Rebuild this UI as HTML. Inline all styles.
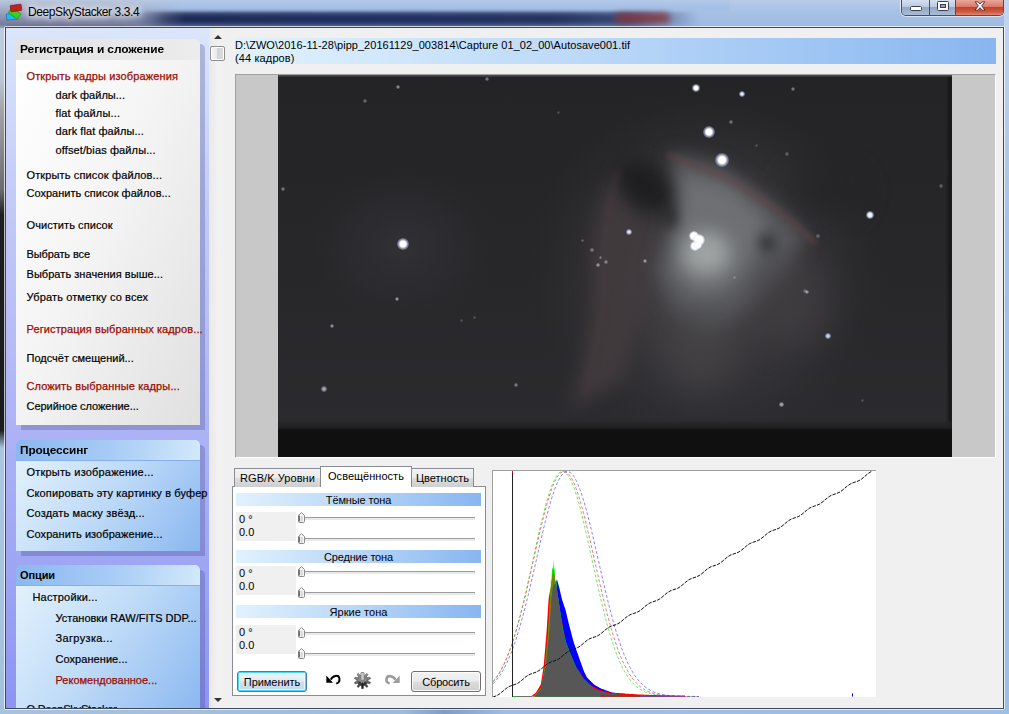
<!DOCTYPE html>
<html lang="ru"><head><meta charset="utf-8"><title>DeepSkyStacker 3.3.4</title>
<style>
*{box-sizing:border-box;margin:0;padding:0}
html,body{width:1009px;height:714px;overflow:hidden}
body{position:relative;font-family:"Liberation Sans",sans-serif;font-size:11px;color:#000;background:#a2c1e6}
.abs,.win *{position:absolute}
.win{position:absolute;left:0;top:0;width:1009px;height:714px;overflow:hidden}
/* aero frame */
.frameL{left:0;top:24px;width:6px;height:690px;background:linear-gradient(180deg,rgba(122,127,154,0) 0,#c0cde0 8px,#b9c6d6 56px,#a3a5a8 86px,#6a6b6e 166px,#1d1e22 191px,#1a1b1f 406px,#a9c6e2 424px,#a3c0de 690px)}
.frameR{left:1004px;top:0;width:5px;height:714px;background:linear-gradient(180deg,#c3d6ee 0,#b7cdea 100px,#a3c2e6 240px,#9dbfe4 714px)}
.frameB{left:0;top:709px;width:1009px;height:5px;background:linear-gradient(90deg,#a6c2de 0,#9ebbdc 40%,#7f9cc4 44%,#9ebde2 50%,#9dbfe4 100%)}
.title{left:0;top:0;width:1009px;height:28px;background:linear-gradient(180deg,#b9cbe6 0,#a9c2e6 10px,#9fbbe2 27px)}
.tl{left:0;top:0;width:200px;height:28px;background:linear-gradient(180deg,rgba(186,200,222,1) 0,rgba(150,158,186,1) 14px,rgba(112,118,150,1) 26px);-webkit-mask-image:linear-gradient(90deg,#000 0,#000 120px,transparent 185px);mask-image:linear-gradient(90deg,#000 0,#000 120px,transparent 185px)}
.tl2{left:100px;top:0;width:90px;height:28px;background:linear-gradient(90deg,rgba(0,0,0,0),#a9c2e6 100%);opacity:0}
.navy{left:110px;top:11px;width:590px;height:16px;border-radius:8px;background:linear-gradient(90deg,rgba(30,40,80,0) 0,#1b2854 9%,#1c2c5c 40%,#22305e 75%,#3a4a78 88%,rgba(80,100,150,0) 100%);filter:blur(3.5px)}
.navytop{left:130px;top:0;width:600px;height:13px;background:linear-gradient(180deg,#b4c9e8 0,#a4c0e6 8px,rgba(150,175,215,0) 13px)}
.redblob{left:615px;top:13px;width:55px;height:10px;border-radius:5px;background:#8a3438;filter:blur(3px);opacity:.8}
.ttext{left:28px;top:5px;font-size:12px;line-height:15px;white-space:nowrap;color:#000;text-shadow:0 0 6px #fff,0 0 8px #fff,0 0 10px rgba(255,255,255,.9)}
/* caption buttons */
.cap{left:901px;top:0;width:103px;height:16px;border:1px solid #46506a;border-top:0;border-radius:0 0 5px 5px;box-shadow:0 0 0 1px rgba(255,255,255,.55);overflow:hidden}
.cb{top:0;height:15px;background:linear-gradient(180deg,#d4dfee 0,#bccbe0 45%,#93a8c6 50%,#a9bcd6 100%)}
.cmin{left:0;width:28px;border-right:1px solid #46506a}
.cmax{left:28px;width:26px;border-right:1px solid #46506a}
.ccl{left:54px;width:48px;background:linear-gradient(180deg,#eaa79b 0,#d9796a 45%,#c6402a 50%,#cf5a40 80%,#dd8a72 100%)}
/* client */
.clientbd{left:4px;top:26px;width:1001px;height:684px;border:1px solid rgba(255,255,255,.7);border-radius:2px}
.client{left:5px;top:27px;width:999px;height:682px;border:1px solid #3f4a60;background:#f0f0f0;overflow:hidden}
.bar{left:0;top:0;width:203px;height:680px;background:linear-gradient(180deg,#dbe6fa 0,#c4ccf8 160px,#aeb4f5 390px,#9ca3f3 560px,#8d94f1 680px);overflow:hidden}
.sb{left:203px;top:0;width:17px;height:680px;background:linear-gradient(90deg,#e9e9e9 0,#f1f1f1 55%,#f0f0f0 100%)}
.sbthumb{left:1px;top:18px;width:15px;height:15px;border:1px solid #8e8e8e;border-radius:2px;background:linear-gradient(90deg,#f6f6f6 0,#e9e9ea 45%,#d3d4d7 50%,#dcdde0 100%);box-shadow:inset 0 0 0 1px #fff}
.arr{left:5px;width:0;height:0;border-left:4px solid transparent;border-right:4px solid transparent}
.arr.up{top:7px;border-bottom:4px solid #333}
.arr.dn{top:670px;border-top:4px solid #333}
/* panels */
.pshadow{background:rgba(60,70,130,.28)}
.phead{left:10px;width:184px;height:21px;font-weight:bold;font-size:11px;line-height:20px;padding-left:4px;white-space:nowrap;border-radius:5px 5px 0 0;letter-spacing:-.1px}
.pbody{left:10px;width:184px}
.p1h{top:11px;background:linear-gradient(100deg,#e2e2e2 0,#ececec 100%)}
.p1b{top:32px;height:365px;background:linear-gradient(115deg,#ffffff 0,#f4f4f4 45%,#e0e0e0 100%)}
.p2h{top:412px;background:linear-gradient(100deg,#8bb7f0 0,#a9cdf5 55%,#d3e9fb 100%);border-bottom:1px solid #86b0ec}
.p2b{top:433px;height:90px;background:linear-gradient(125deg,#e2f1fc 0,#bcd9f8 50%,#8ab7f0 100%)}
.p3h{top:537px;background:linear-gradient(100deg,#8bb7f0 0,#a9cdf5 55%,#d3e9fb 100%);border-bottom:1px solid #86b0ec}
.p3b{top:558px;height:130px;background:linear-gradient(125deg,#e2f1fc 0,#c0dcf8 45%,#8ab7f0 100%)}
.f{position:static!important;white-space:nowrap}
.it{white-space:nowrap;font-size:11px;line-height:15px;color:#000;-webkit-text-stroke:.2px #000}
.it.red{color:#9a0c00;-webkit-text-stroke:.25px #9a0c00}
/* main */
.path{left:229px;top:10px;width:761px;height:26px;background:linear-gradient(90deg,#e1f2fd 0,#bcd9f8 45%,#88b6f0 100%);font-size:11px;line-height:12.5px;padding:1px 0 0 0;white-space:nowrap}
.imgframe{left:229px;top:46px;width:761px;height:384px;background:#c8c8c8;border:1px solid;border-color:#a0a0a0 #fff #fff #a0a0a0}
.photo{left:42px;top:0;width:674px;height:382px;overflow:hidden;background:
 radial-gradient(ellipse 60px 38px at 362px 120px,rgba(24,24,27,.85) 0,rgba(24,24,27,.5) 55%,rgba(24,24,27,0) 100%),
 radial-gradient(ellipse 40px 34px at 418px 168px,rgba(168,168,172,.95) 0,rgba(140,140,145,.7) 40%,rgba(100,100,104,.25) 75%,rgba(90,90,95,0) 100%),
 radial-gradient(ellipse 70px 80px at 405px 175px,rgba(125,122,126,.85) 0,rgba(100,97,100,.55) 50%,rgba(70,66,70,0) 100%),
 radial-gradient(ellipse 120px 130px at 400px 215px,rgba(86,80,84,.9) 0,rgba(66,61,64,.6) 50%,rgba(45,42,45,0) 100%),
 radial-gradient(ellipse 200px 190px at 400px 200px,rgba(52,48,52,.9) 0,rgba(44,42,45,.5) 55%,rgba(36,36,38,0) 100%),
 radial-gradient(ellipse 70px 60px at 125px 170px,rgba(48,47,50,.9) 0,rgba(38,38,40,0) 100%),
 radial-gradient(ellipse 480px 300px at 337px 180px,#2a2a2c 0,#262628 60%,#1e1e20 100%)}
.photo i{display:block;border-radius:50%}
.neb{left:0;top:0}
.redarc{left:385px;top:70px;width:150px;height:3px;background:linear-gradient(90deg,rgba(110,70,70,0),rgba(120,78,78,.7) 30%,rgba(110,72,72,.6) 70%,rgba(100,70,70,0));transform-origin:0 50%;transform:rotate(41deg);filter:blur(1.5px)}
.redarc2{left:330px;top:150px;width:120px;height:4px;background:linear-gradient(90deg,rgba(100,66,66,0),rgba(100,66,66,.5) 40%,rgba(100,70,70,0));transform-origin:100% 50%;transform:rotate(-62deg);filter:blur(2px)}
.pband{left:0;top:340px;width:674px;height:42px;background:linear-gradient(180deg,rgba(16,16,16,0) 0,rgba(22,22,24,.55) 10px,#0f0f0f 15px,#0e0e0e 100%)}
.pvl{left:0;top:0;width:6px;height:382px;background:linear-gradient(90deg,rgba(10,10,10,.5),rgba(10,10,10,0))}
.pvr{left:656px;top:0;width:18px;height:382px;background:linear-gradient(270deg,rgba(14,14,16,.85) 0,rgba(20,20,22,.5) 6px,rgba(20,20,22,0) 18px)}
.pvt{left:0;top:0;width:674px;height:5px;background:linear-gradient(180deg,rgba(90,90,90,.5),rgba(40,40,40,0))}
/* tabs */
.tabs{left:226px;top:438px;width:262px;height:232px}
.tab{height:19px;top:2px;border:1px solid #898c95;border-bottom:0;background:linear-gradient(180deg,#f2f2f2 0,#ebebeb 50%,#dddddd 51%,#cfcfcf 100%);font-size:11px;line-height:18px;text-align:center;white-space:nowrap}
.tab.act{top:0;height:21px;background:#fff;z-index:3;line-height:18px}
.page{left:0;top:20px;width:254px;height:210px;border:1px solid #898c95;background:#fff}
.ghead{left:4px;width:245px;height:13px;padding-top:1px;background:linear-gradient(90deg,#e1f2fd 0,#bcd9f8 45%,#88b6f0 100%);font-size:11px;line-height:13px;text-align:center;white-space:nowrap}
.lbl{left:4px;width:60px;height:29px;background:#f0f0f0}
.lbl span{left:3px;font-size:11px;line-height:13px;white-space:nowrap}
.lbl span:first-child{top:1px}
.lbl span:last-child{top:14px}
.trk{left:70px;width:173px;height:3px;background:linear-gradient(180deg,#9c9c9c 0,#9c9c9c 1px,#e7eaea 1px,#e7eaea 100%)}
.thumb{left:66px}
.btn{top:205px;height:21px;border:1px solid #707070;border-radius:3px;background:linear-gradient(180deg,#f2f2f2 0,#ebebeb 48%,#dddddd 52%,#cfcfcf 100%);box-shadow:inset 0 0 0 1px rgba(255,255,255,.85);font-size:11px;line-height:21px;text-align:center;white-space:nowrap}
.btn.def{border-color:#3c7fb1;box-shadow:inset 0 0 0 1px #48d8fb,inset 0 0 0 2px rgba(255,255,255,.6);background:linear-gradient(180deg,#f0f4f9 0,#e0ebf5 48%,#cfdfee 52%,#c4d8ea 100%)}
.hist{left:-1px;top:-1px}
.histbox{left:486px;top:442px;width:384px;height:227px;background:#fff;border-top:1px solid #a0a0a0;border-left:1px solid #a0a0a0;overflow:hidden}
</style></head><body>
<div class="win">
 <div class="title">
  <div class="navy"></div><div class="navytop"></div><div class="redblob"></div>
  <div class="tl"></div>
  <svg class="abs" style="left:5px;top:3px" width="20" height="18" viewBox="0 0 20 18">
   <g transform="rotate(-6 8 14)"><rect x="1.5" y="10.5" width="11" height="6" fill="#22b7ee" stroke="#1a6a90" stroke-width=".6"/></g>
   <g transform="rotate(38 9.5 10.5)"><rect x="4" y="7" width="11" height="6.5" fill="#36d21e" stroke="#1f8a12" stroke-width=".6"/></g>
   <g transform="rotate(-8 11 5)"><rect x="5.5" y="1.8" width="11" height="6.3" rx=".6" fill="#c4201c" stroke="#7a1010" stroke-width=".6"/></g>
  </svg>
  <div class="ttext"><span class="f" style="letter-spacing:-0.406px">DeepSkyStacker 3.3.4</span></div>
  <div class="cap">
   <div class="cb cmin"><svg class="abs" style="left:8px;top:6px" width="12" height="6"><rect x=".5" y=".5" width="11" height="4" rx="1" fill="#fff" stroke="#3a3f55"/></svg></div>
   <div class="cb cmax"><svg class="abs" style="left:7px;top:1px" width="12" height="11"><rect x=".5" y=".5" width="11" height="9" rx="1" fill="#fff" stroke="#3a3f55"/><rect x="3.5" y="3.5" width="5" height="3" fill="#8fa3c2" stroke="#3a3f55"/></svg></div>
   <div class="cb ccl"><svg class="abs" style="left:18px;top:1px" width="12" height="10" viewBox="0 0 14 12"><path d="M1.2 1 L4.6 1 L7 3.6 L9.4 1 L12.8 1 L9 5.8 L13 11 L9.6 11 L7 8 L4.4 11 L1 11 L5 5.8 Z" fill="#fff" stroke="#4a2a30" stroke-width="1.1"/></svg></div>
  </div>
 </div>
 <div class="frameL"></div><div class="frameR"></div><div class="frameB"></div>
 <div class="clientbd"></div>
 <div class="client">
  <div class="bar">
   <div class="pshadow" style="left:15px;top:16px;width:184px;height:386px;border-radius:5px 5px 0 0"></div>
   <div class="phead p1h"><span class="f" style="display:inline-block;transform-origin:0 50%;transform:scaleX(1.0882)">Регистрация и сложение</span></div><div class="pbody p1b"></div>
   <div class="pshadow" style="left:15px;top:417px;width:184px;height:111px;border-radius:5px 5px 0 0"></div>
   <div class="phead p2h"><span class="f" style="display:inline-block;transform-origin:0 50%;transform:scaleX(1.0740)">Процессинг</span></div><div class="pbody p2b"></div>
   <div class="pshadow" style="left:15px;top:542px;width:184px;height:140px;border-radius:5px 5px 0 0"></div>
   <div class="phead p3h"><span class="f" style="display:inline-block;transform-origin:0 50%;transform:scaleX(1.0000)">Опции</span></div><div class="pbody p3b"></div>
   <span class="it red" style="left:20.5px;top:41px;letter-spacing:0.133px">Открыть кадры изображения</span><span class="it" style="left:49.5px;top:60px;letter-spacing:0.020px">dark файлы...</span><span class="it" style="left:49.5px;top:78px;letter-spacing:0.163px">flat файлы...</span><span class="it" style="left:49.5px;top:96px;letter-spacing:0.076px">dark flat файлы...</span><span class="it" style="left:49.5px;top:115px;letter-spacing:0.120px">offset/bias файлы...</span><span class="it" style="left:20.5px;top:140px;letter-spacing:0.132px">Открыть список файлов...</span><span class="it" style="left:20.5px;top:158px;letter-spacing:0.011px">Сохранить список файлов...</span><span class="it" style="left:20.5px;top:190px;letter-spacing:0.071px">Очистить список</span><span class="it" style="left:20.5px;top:219px;letter-spacing:-0.120px">Выбрать все</span><span class="it" style="left:20.5px;top:239px;letter-spacing:0.052px">Выбрать значения выше...</span><span class="it" style="left:20.5px;top:262px;letter-spacing:0.118px">Убрать отметку со всех</span><span class="it red" style="left:20.5px;top:294px;letter-spacing:0.100px">Регистрация выбранных кадров...</span><span class="it" style="left:20.5px;top:323px;letter-spacing:-0.005px">Подсчёт смещений...</span><span class="it red" style="left:20.5px;top:351px;letter-spacing:0.128px">Сложить выбранные кадры...</span><span class="it" style="left:20.5px;top:371px;letter-spacing:-0.029px">Серийное сложение...</span><span class="it" style="left:20.5px;top:437px;letter-spacing:0.192px">Открыть изображение...</span><span class="it" style="left:20.5px;top:458px;letter-spacing:0.120px">Скопировать эту картинку в буфер</span><span class="it" style="left:20.5px;top:478px;letter-spacing:0.155px">Создать маску звёзд...</span><span class="it" style="left:20.5px;top:499px;letter-spacing:0.069px">Сохранить изображение...</span><span class="it" style="left:26.5px;top:562px;letter-spacing:0.181px">Настройки...</span><span class="it" style="left:49.5px;top:583px;letter-spacing:0.004px">Установки RAW/FITS DDP...</span><span class="it" style="left:49.5px;top:603px;letter-spacing:0.344px">Загрузка...</span><span class="it" style="left:49.5px;top:624px;letter-spacing:0.060px">Сохранение...</span><span class="it red" style="left:49.5px;top:645px;letter-spacing:0.005px">Рекомендованное...</span><span class="it" style="left:20.5px;top:674px;letter-spacing:-0.203px">О DeepSkyStacker</span>
  </div>
  <div class="sb"><div class="arr up"></div><div class="sbthumb"></div><div class="arr dn"></div></div>
  <div class="path"><span class="f" style="letter-spacing:0.040px">D:\ZWO\2016-11-28\pipp_20161129_003814\Capture 01_02_00\Autosave001.tif</span><br><span class="f" style="letter-spacing:0.120px">(44 кадров)</span></div>
  <div class="imgframe"><div class="photo">
    <svg class="neb" width="674" height="382" viewBox="0 0 674 382">
<defs>
<linearGradient id="bgv" x1="0" y1="0" x2="0" y2="1"><stop offset="0" stop-color="#242427"/><stop offset=".5" stop-color="#27272a"/><stop offset="1" stop-color="#2c2c30"/></linearGradient>
<radialGradient id="g1"><stop offset="0" stop-color="#4a4649" stop-opacity="1"/><stop offset=".35" stop-color="#434044" stop-opacity=".85"/><stop offset=".7" stop-color="#38363a" stop-opacity=".4"/><stop offset="1" stop-color="#2a2a2d" stop-opacity="0"/></radialGradient>
<radialGradient id="g2"><stop offset="0" stop-color="#35343a" stop-opacity=".9"/><stop offset=".6" stop-color="#303035" stop-opacity=".5"/><stop offset="1" stop-color="#28282b" stop-opacity="0"/></radialGradient>
<filter color-interpolation-filters="sRGB" id="b16" x="-50%" y="-50%" width="200%" height="200%"><feGaussianBlur stdDeviation="16"/></filter>
<filter color-interpolation-filters="sRGB" id="b9" x="-50%" y="-50%" width="200%" height="200%"><feGaussianBlur stdDeviation="9"/></filter>
<filter color-interpolation-filters="sRGB" id="b6" x="-50%" y="-50%" width="200%" height="200%"><feGaussianBlur stdDeviation="6"/></filter>
<filter color-interpolation-filters="sRGB" id="b3" x="-50%" y="-50%" width="200%" height="200%"><feGaussianBlur stdDeviation="3"/></filter>
<filter color-interpolation-filters="sRGB" id="b1" x="-50%" y="-50%" width="200%" height="200%"><feGaussianBlur stdDeviation="1.4"/></filter>
<linearGradient id="band" x1="0" y1="0" x2="0" y2="1"><stop offset="0" stop-color="#262629" stop-opacity=".0"/><stop offset=".08" stop-color="#242427" stop-opacity=".8"/><stop offset=".2" stop-color="#1e1e20"/><stop offset=".25" stop-color="#101010"/><stop offset="1" stop-color="#0f0f0f"/></linearGradient>
</defs>
<rect width="674" height="382" fill="url(#bgv)"/>
<ellipse cx="125" cy="172" rx="100" ry="80" fill="url(#g2)" opacity=".8"/>
<ellipse cx="430" cy="200" rx="185" ry="190" fill="url(#g1)"/>
<path d="M336 100 Q310 150 316 215 Q312 270 292 335 L345 305 Q368 235 374 170 Z" fill="#423b3e" filter="url(#b9)" opacity=".9"/>
<path d="M394 78 L441 90 L498 130 L528 160 L508 200 L468 234 L427 262 L394 234 L378 194 L392 154 L392 114 Z" fill="#58595d" filter="url(#b9)"/>
<path d="M402 100 L450 110 L488 145 L476 190 L448 218 L418 226 L394 198 L400 150 Z" fill="#6e7073" filter="url(#b9)"/>
<ellipse cx="428" cy="178" rx="24" ry="22" fill="#9fa3a4" filter="url(#b9)"/>
<ellipse cx="421" cy="275" rx="34" ry="42" fill="#454447" filter="url(#b16)" opacity=".7"/>
<ellipse cx="515" cy="225" rx="36" ry="46" fill="#423f43" filter="url(#b16)" opacity=".7"/>
<ellipse cx="368" cy="112" rx="33" ry="21" transform="rotate(40 368 112)" fill="#1d1d20" filter="url(#b9)" opacity=".92"/>
<ellipse cx="392" cy="142" rx="8" ry="12" fill="#222225" filter="url(#b6)" opacity=".7"/>
<ellipse cx="489" cy="168" rx="8" ry="9" fill="#2c2c2f" filter="url(#b6)" opacity=".8"/>
<ellipse cx="545" cy="118" rx="36" ry="22" fill="#222225" filter="url(#b16)" opacity=".6"/>
<path d="M390 80 Q420 92 446 103 Q480 120 505 140 Q520 152 538 168" fill="none" stroke="#644648" stroke-width="4" filter="url(#b3)" opacity=".8"/>
<path d="M340 95 Q322 160 326 210 Q322 260 306 320" fill="none" stroke="#4e3e40" stroke-width="5" filter="url(#b3)" opacity=".4"/>
<rect x="670" y="0" width="4" height="382" fill="#141416" filter="url(#b1)" opacity=".9"/>
<rect x="-10" y="345" width="694" height="40" fill="url(#band)"/>
<rect x="0" y="0" width="674" height="1.5" fill="#555" opacity=".8"/>
</svg>

    <i style="left:414.0px;top:9.0px;width:8.1px;height:8.1px;opacity:1;background:radial-gradient(circle,#fff 0,#fff 34%,rgba(200,210,255,.5) 58%,rgba(120,120,140,0) 85%)"></i><i style="left:460.9px;top:15.9px;width:6.2px;height:6.2px;opacity:1;background:radial-gradient(circle,#e8f0ff 0,#e8f0ff 20%,rgba(200,210,255,.5) 58%,rgba(120,120,140,0) 85%)"></i><i style="left:424.8px;top:50.8px;width:12.4px;height:12.4px;opacity:1;background:radial-gradient(circle,#fff 0,#fff 34%,rgba(200,210,255,.5) 58%,rgba(120,120,140,0) 85%)"></i><i style="left:436.9px;top:77.9px;width:14.3px;height:14.3px;opacity:1;background:radial-gradient(circle,#fff 0,#fff 34%,rgba(200,210,255,.5) 58%,rgba(120,120,140,0) 85%)"></i><i style="left:587.7px;top:135.7px;width:8.7px;height:8.7px;opacity:1;background:radial-gradient(circle,#eef4ff 0,#eef4ff 34%,rgba(200,210,255,.5) 58%,rgba(120,120,140,0) 85%)"></i><i style="left:118.8px;top:162.8px;width:12.4px;height:12.4px;opacity:1;background:radial-gradient(circle,#fff 0,#fff 34%,rgba(200,210,255,.5) 58%,rgba(120,120,140,0) 85%)"></i><i style="left:348.2px;top:154.2px;width:5.6px;height:5.6px;opacity:0.9;background:radial-gradient(circle,#fff 0,#fff 20%,rgba(200,210,255,.5) 58%,rgba(120,120,140,0) 85%)"></i><i style="left:547.2px;top:258.2px;width:5.6px;height:5.6px;opacity:0.9;background:radial-gradient(circle,#dfe8ff 0,#dfe8ff 20%,rgba(200,210,255,.5) 58%,rgba(120,120,140,0) 85%)"></i><i style="left:43.2px;top:311.2px;width:5.6px;height:5.6px;opacity:0.7;background:radial-gradient(circle,#e8e0d8 0,#e8e0d8 20%,rgba(200,210,255,.5) 58%,rgba(120,120,140,0) 85%)"></i><i style="left:500.5px;top:326.5px;width:5.0px;height:5.0px;opacity:0.7;background:radial-gradient(circle,#e8dcc8 0,#e8dcc8 20%,rgba(200,210,255,.5) 58%,rgba(120,120,140,0) 85%)"></i><i style="left:526.8px;top:214.8px;width:4.3px;height:4.3px;opacity:0.6;background:radial-gradient(circle,#e0d8c8 0,#e0d8c8 20%,rgba(200,210,255,.5) 58%,rgba(120,120,140,0) 85%)"></i><i style="left:51.8px;top:248.8px;width:4.3px;height:4.3px;opacity:0.6;background:radial-gradient(circle,#ddd 0,#ddd 20%,rgba(200,210,255,.5) 58%,rgba(120,120,140,0) 85%)"></i><i style="left:116.8px;top:221.8px;width:4.3px;height:4.3px;opacity:0.6;background:radial-gradient(circle,#ddd 0,#ddd 20%,rgba(200,210,255,.5) 58%,rgba(120,120,140,0) 85%)"></i><i style="left:236.1px;top:308.1px;width:3.7px;height:3.7px;opacity:0.5;background:radial-gradient(circle,#ccc 0,#ccc 20%,rgba(200,210,255,.5) 58%,rgba(120,120,140,0) 85%)"></i><i style="left:2.8px;top:111.8px;width:4.3px;height:4.3px;opacity:0.5;background:radial-gradient(circle,#ccc 0,#ccc 20%,rgba(200,210,255,.5) 58%,rgba(120,120,140,0) 85%)"></i><i style="left:117.8px;top:9.8px;width:4.3px;height:4.3px;opacity:0.6;background:radial-gradient(circle,#dcc 0,#dcc 20%,rgba(200,210,255,.5) 58%,rgba(120,120,140,0) 85%)"></i><i style="left:207.1px;top:2.1px;width:3.7px;height:3.7px;opacity:0.5;background:radial-gradient(circle,#ccc 0,#ccc 20%,rgba(200,210,255,.5) 58%,rgba(120,120,140,0) 85%)"></i><i style="left:85.3px;top:24.3px;width:3.4px;height:3.4px;opacity:0.4;background:radial-gradient(circle,#ccc 0,#ccc 20%,rgba(200,210,255,.5) 58%,rgba(120,120,140,0) 85%)"></i><i style="left:513.0px;top:12.0px;width:4.0px;height:4.0px;opacity:0.5;background:radial-gradient(circle,#dcb 0,#dcb 20%,rgba(200,210,255,.5) 58%,rgba(120,120,140,0) 85%)"></i><i style="left:365.0px;top:184.0px;width:4.0px;height:4.0px;opacity:0.6;background:radial-gradient(circle,#ddd 0,#ddd 20%,rgba(200,210,255,.5) 58%,rgba(120,120,140,0) 85%)"></i><i style="left:318.1px;top:188.1px;width:3.7px;height:3.7px;opacity:0.6;background:radial-gradient(circle,#ddd 0,#ddd 20%,rgba(200,210,255,.5) 58%,rgba(120,120,140,0) 85%)"></i><i style="left:312.3px;top:173.3px;width:3.4px;height:3.4px;opacity:0.5;background:radial-gradient(circle,#ccb 0,#ccb 20%,rgba(200,210,255,.5) 58%,rgba(120,120,140,0) 85%)"></i><i style="left:321.4px;top:181.4px;width:3.1px;height:3.1px;opacity:0.5;background:radial-gradient(circle,#ccb 0,#ccb 20%,rgba(200,210,255,.5) 58%,rgba(120,120,140,0) 85%)"></i><i style="left:326.3px;top:185.3px;width:3.4px;height:3.4px;opacity:0.5;background:radial-gradient(circle,#ccb 0,#ccb 20%,rgba(200,210,255,.5) 58%,rgba(120,120,140,0) 85%)"></i><i style="left:451.1px;top:45.1px;width:3.7px;height:3.7px;opacity:0.5;background:radial-gradient(circle,#cb9 0,#cb9 20%,rgba(200,210,255,.5) 58%,rgba(120,120,140,0) 85%)"></i><i style="left:507.3px;top:77.3px;width:3.4px;height:3.4px;opacity:0.4;background:radial-gradient(circle,#ba9 0,#ba9 20%,rgba(200,210,255,.5) 58%,rgba(120,120,140,0) 85%)"></i><i style="left:525.3px;top:214.3px;width:3.4px;height:3.4px;opacity:0.4;background:radial-gradient(circle,#cb9 0,#cb9 20%,rgba(200,210,255,.5) 58%,rgba(120,120,140,0) 85%)"></i><i style="left:538.1px;top:159.1px;width:3.7px;height:3.7px;opacity:0.4;background:radial-gradient(circle,#cb9 0,#cb9 20%,rgba(200,210,255,.5) 58%,rgba(120,120,140,0) 85%)"></i><i style="left:661.3px;top:109.3px;width:3.4px;height:3.4px;opacity:0.4;background:radial-gradient(circle,#bbb 0,#bbb 20%,rgba(200,210,255,.5) 58%,rgba(120,120,140,0) 85%)"></i><i style="left:279.4px;top:35.5px;width:3.1px;height:3.1px;opacity:0.3;background:radial-gradient(circle,#bbb 0,#bbb 20%,rgba(200,210,255,.5) 58%,rgba(120,120,140,0) 85%)"></i><i style="left:182.4px;top:244.4px;width:3.1px;height:3.1px;opacity:0.3;background:radial-gradient(circle,#bbb 0,#bbb 20%,rgba(200,210,255,.5) 58%,rgba(120,120,140,0) 85%)"></i><i style="left:195.4px;top:241.4px;width:3.1px;height:3.1px;opacity:0.3;background:radial-gradient(circle,#bbb 0,#bbb 20%,rgba(200,210,255,.5) 58%,rgba(120,120,140,0) 85%)"></i><i style="left:303.4px;top:164.4px;width:3.1px;height:3.1px;opacity:0.4;background:radial-gradient(circle,#bbb 0,#bbb 20%,rgba(200,210,255,.5) 58%,rgba(120,120,140,0) 85%)"></i><i style="left:455.4px;top:201.4px;width:3.1px;height:3.1px;opacity:0.4;background:radial-gradient(circle,#ccb 0,#ccb 20%,rgba(200,210,255,.5) 58%,rgba(120,120,140,0) 85%)"></i><i style="left:477.4px;top:68.5px;width:3.1px;height:3.1px;opacity:0.3;background:radial-gradient(circle,#bbb 0,#bbb 20%,rgba(200,210,255,.5) 58%,rgba(120,120,140,0) 85%)"></i><i style="left:582.5px;top:324.4px;width:3.1px;height:3.1px;opacity:0.3;background:radial-gradient(circle,#bbb 0,#bbb 20%,rgba(200,210,255,.5) 58%,rgba(120,120,140,0) 85%)"></i><i style="left:410.6px;top:155.6px;width:10.9px;height:10.9px;background:radial-gradient(circle,#fff 0,#fff 45%,rgba(220,225,255,.5) 65%,rgba(160,160,180,0) 80%)"></i><i style="left:415.2px;top:159.2px;width:11.6px;height:11.6px;background:radial-gradient(circle,#fff 0,#fff 45%,rgba(220,225,255,.5) 65%,rgba(160,160,180,0) 80%)"></i><i style="left:411.6px;top:165.6px;width:10.9px;height:10.9px;background:radial-gradient(circle,#fff 0,#fff 45%,rgba(220,225,255,.5) 65%,rgba(160,160,180,0) 80%)"></i><i style="left:415.6px;top:165.6px;width:8.8px;height:8.8px;background:radial-gradient(circle,#fff 0,#fff 45%,rgba(220,225,255,.5) 65%,rgba(160,160,180,0) 80%)"></i>
  </div></div>
  <div class="tabs">
   <div class="page"></div>
   <div class="ghead" style="top:27px"><span class="f" style="letter-spacing:-0.128px">Тёмные тона</span></div><div class="lbl" style="top:46px"><span>0 °</span><span>0.0</span></div><div class="trk" style="top:51px"></div><svg class="thumb" style="top:46px" width="7" height="11" viewBox="0 0 7 11"><path d="M0.5 3.5 L3.5 0.5 L6.5 3.5 L6.5 9.5 Q6.5 10.5 5.5 10.5 L1.5 10.5 Q0.5 10.5 0.5 9.5 Z" fill="#f4f4f4" stroke="#8a8a8a"/><rect x="0.5" y="3.5" width="1.4" height="6" fill="#666"/><rect x="2.6" y="4" width="2" height="5.5" fill="#d4d4d4"/></svg><div class="trk" style="top:72px"></div><svg class="thumb" style="top:67px" width="7" height="11" viewBox="0 0 7 11"><path d="M0.5 3.5 L3.5 0.5 L6.5 3.5 L6.5 9.5 Q6.5 10.5 5.5 10.5 L1.5 10.5 Q0.5 10.5 0.5 9.5 Z" fill="#f4f4f4" stroke="#8a8a8a"/><rect x="0.5" y="3.5" width="1.4" height="6" fill="#666"/><rect x="2.6" y="4" width="2" height="5.5" fill="#d4d4d4"/></svg>
   <div class="ghead" style="top:84px"><span class="f" style="letter-spacing:-0.180px">Средние тона</span></div><div class="lbl" style="top:100px"><span>0 °</span><span>0.0</span></div><div class="trk" style="top:105px"></div><svg class="thumb" style="top:100px" width="7" height="11" viewBox="0 0 7 11"><path d="M0.5 3.5 L3.5 0.5 L6.5 3.5 L6.5 9.5 Q6.5 10.5 5.5 10.5 L1.5 10.5 Q0.5 10.5 0.5 9.5 Z" fill="#f4f4f4" stroke="#8a8a8a"/><rect x="0.5" y="3.5" width="1.4" height="6" fill="#666"/><rect x="2.6" y="4" width="2" height="5.5" fill="#d4d4d4"/></svg><div class="trk" style="top:126px"></div><svg class="thumb" style="top:121px" width="7" height="11" viewBox="0 0 7 11"><path d="M0.5 3.5 L3.5 0.5 L6.5 3.5 L6.5 9.5 Q6.5 10.5 5.5 10.5 L1.5 10.5 Q0.5 10.5 0.5 9.5 Z" fill="#f4f4f4" stroke="#8a8a8a"/><rect x="0.5" y="3.5" width="1.4" height="6" fill="#666"/><rect x="2.6" y="4" width="2" height="5.5" fill="#d4d4d4"/></svg>
   <div class="ghead" style="top:139px"><span class="f" style="letter-spacing:0.064px">Яркие тона</span></div><div class="lbl" style="top:159px"><span>0 °</span><span>0.0</span></div><div class="trk" style="top:166px"></div><svg class="thumb" style="top:161px" width="7" height="11" viewBox="0 0 7 11"><path d="M0.5 3.5 L3.5 0.5 L6.5 3.5 L6.5 9.5 Q6.5 10.5 5.5 10.5 L1.5 10.5 Q0.5 10.5 0.5 9.5 Z" fill="#f4f4f4" stroke="#8a8a8a"/><rect x="0.5" y="3.5" width="1.4" height="6" fill="#666"/><rect x="2.6" y="4" width="2" height="5.5" fill="#d4d4d4"/></svg><div class="trk" style="top:187px"></div><svg class="thumb" style="top:182px" width="7" height="11" viewBox="0 0 7 11"><path d="M0.5 3.5 L3.5 0.5 L6.5 3.5 L6.5 9.5 Q6.5 10.5 5.5 10.5 L1.5 10.5 Q0.5 10.5 0.5 9.5 Z" fill="#f4f4f4" stroke="#8a8a8a"/><rect x="0.5" y="3.5" width="1.4" height="6" fill="#666"/><rect x="2.6" y="4" width="2" height="5.5" fill="#d4d4d4"/></svg>
   <div class="btn def" style="left:5px;width:70px"><span class="f" style="letter-spacing:-0.055px">Применить</span></div>
   <div class="btn" style="left:179px;width:70px"><span class="f" style="letter-spacing:-0.172px">Сбросить</span></div>
   <svg class="abs" style="left:94px;top:208px" width="16" height="11" viewBox="0 0 16 11"><path d="M0.3 1.6 L0.3 8.8 L7 8.8 Z" fill="#000"/><path d="M4.8 5.6 C6.5 1.6 12.6 0.2 13.4 4.4 C13.9 7.4 12.4 9.2 10.2 9.4" fill="none" stroke="#000" stroke-width="2"/></svg>
   <svg class="abs" style="left:121.500px;top:205.500px" width="17" height="17" viewBox="0 0 17 17"><defs><linearGradient id="gg" x1="0" y1="0" x2="0" y2="1"><stop offset="0" stop-color="#9a9a9a"/><stop offset=".55" stop-color="#6a6a6a"/><stop offset="1" stop-color="#2e2e2e"/></linearGradient></defs><path d="M7.45 3.00 L7.68 0.34 L9.32 0.34 L9.55 3.00 L10.88 3.43 L12.63 1.42 L13.96 2.38 L12.58 4.67 L13.41 5.80 L16.00 5.20 L16.51 6.76 L14.06 7.80 L14.06 9.20 L16.51 10.24 L16.00 11.80 L13.41 11.20 L12.58 12.33 L13.96 14.62 L12.63 15.58 L10.88 13.57 L9.55 14.00 L9.32 16.66 L7.68 16.66 L7.45 14.00 L6.12 13.57 L4.37 15.58 L3.04 14.62 L4.42 12.33 L3.59 11.20 L1.00 11.80 L0.49 10.24 L2.94 9.20 L2.94 7.80 L0.49 6.76 L1.00 5.20 L3.59 5.80 L4.42 4.67 L3.04 2.38 L4.37 1.42 L6.12 3.43Z" fill="url(#gg)" stroke="#444" stroke-width=".5"/><circle cx="8.500" cy="9" r="4.200" fill="#8c8c8c"/><path d="M4.500 9.500 A4 4 0 0 0 12.500 9.500 L10.600 9.500 A2.100 2.100 0 0 1 6.400 9.500Z" fill="#333"/><rect x="6.800" y=".3" width="3.400" height="8" rx="1" fill="#c8c8c8" stroke="#666" stroke-width=".6"/><rect x="7.900" y="10.500" width="1.200" height="6" fill="#222"/></svg>
   <svg class="abs" style="left:152px;top:208px" width="16" height="11" viewBox="0 0 16 11"><path d="M15.700 1.600 L15.700 9 L8.800 9 Z" fill="#9c9c9c"/><path d="M11.400 5.800 C9.600 1.800 3.600 0.600 2.600 4.600 C2 7.400 3.200 9 5.600 9.400" fill="none" stroke="#9c9c9c" stroke-width="2.600"/></svg>
   <div class="tab" style="left:2px;width:87px"><span class="f" style="letter-spacing:0.057px">RGB/K Уровни</span></div>
   <div class="tab act" style="left:88px;width:92px"><span class="f" style="letter-spacing:0.026px">Освещённость</span></div>
   <div class="tab" style="left:179px;width:63px"><span class="f" style="letter-spacing:0.011px">Цветность</span></div>
  </div>
  <div class="histbox"><svg class="hist" width="384" height="228" viewBox="0 0 384 228"><polyline points="1.0,212.2 2.0,211.0 3.0,209.8 4.0,208.5 5.0,207.1 6.0,205.6 7.0,204.0 8.0,202.3 9.0,200.5 10.0,198.6 11.0,196.7 12.0,194.6 13.0,192.4 14.0,190.1 15.0,187.7 16.0,185.2 17.0,182.6 18.0,179.8 19.0,177.0 20.0,174.0 21.0,170.9 22.0,167.7 23.0,164.4 24.0,161.0 25.0,157.5 26.0,153.8 27.0,150.1 28.0,146.2 29.0,142.3 30.0,138.3 31.0,134.1 32.0,129.9 33.0,125.7 34.0,121.3 35.0,116.9 36.0,112.4 37.0,107.9 38.0,103.4 39.0,98.8 40.0,94.2 41.0,89.6 42.0,85.0 43.0,80.4 44.0,75.8 45.0,71.3 46.0,66.8 47.0,62.3 48.0,58.0 49.0,53.7 50.0,49.5 51.0,45.4 52.0,41.4 53.0,37.6 54.0,33.9 55.0,30.3 56.0,26.9 57.0,23.7 58.0,20.7 59.0,17.9 60.0,15.2 61.0,12.8 62.0,10.6 63.0,8.6 64.0,6.9 65.0,5.4 66.0,4.1 67.0,3.1 68.0,2.3 69.0,1.8 70.0,1.5 71.0,1.5 72.0,1.8 73.0,2.3 74.0,3.1 75.0,4.1 76.0,5.4 77.0,6.9 78.0,8.6 79.0,10.6 80.0,12.8 81.0,15.2 82.0,17.9 83.0,20.7 84.0,23.7 85.0,26.9 86.0,30.3 87.0,33.9 88.0,37.6 89.0,41.4 90.0,45.4 91.0,49.5 92.0,53.7 93.0,58.0 94.0,62.3 95.0,66.8 96.0,71.3 97.0,75.8 98.0,80.4 99.0,85.0 100.0,89.6 101.0,94.2 102.0,98.8 103.0,103.4 104.0,107.9 105.0,112.4 106.0,116.9 107.0,121.3 108.0,125.7 109.0,129.9 110.0,134.1 111.0,138.3 112.0,142.3 113.0,146.2 114.0,150.1 115.0,153.8 116.0,157.5 117.0,161.0 118.0,164.4 119.0,167.7 120.0,170.9 121.0,174.0 122.0,177.0 123.0,179.8 124.0,182.6 125.0,185.2 126.0,187.7 127.0,190.1 128.0,192.4 129.0,194.6 130.0,196.7 131.0,198.6 132.0,200.5 133.0,202.3 134.0,204.0 135.0,205.6 136.0,207.1 137.0,208.5 138.0,209.8 139.0,211.0 140.0,212.2 141.0,213.3 142.0,214.3 143.0,215.3 144.0,216.2 145.0,217.0 146.0,217.8 147.0,218.5 148.0,219.2 149.0,219.8 150.0,220.4 151.0,220.9 152.0,221.4 153.0,221.9 154.0,222.3 155.0,222.7 156.0,223.0 157.0,223.4 158.0,223.7 159.0,223.9 160.0,224.2 161.0,224.4 162.0,224.6 163.0,224.8 164.0,225.0 165.0,225.1 166.0,225.3 167.0,225.4 168.0,225.5 169.0,225.6 170.0,225.7 171.0,225.8 172.0,225.9 173.0,225.9 174.0,226.0 175.0,226.1 176.0,226.1 177.0,226.2 178.0,226.2 179.0,226.2 180.0,226.3 181.0,226.3 182.0,226.3 183.0,226.3 184.0,226.4 185.0,226.4 186.0,226.4 187.0,226.4 188.0,226.4 189.0,226.4 190.0,226.4 191.0,226.4 192.0,226.5 193.0,226.5 194.0,226.5 195.0,226.5 196.0,226.5 197.0,226.5 198.0,226.5 199.0,226.5 200.0,226.5 201.0,226.5 202.0,226.5 203.0,226.5 204.0,226.5 205.0,226.5 206.0,226.5 207.0,226.5" fill="none" stroke="#30e030" stroke-width="1" stroke-dasharray="3,2" opacity="0.7"/><polyline points="1.0,211.5 2.0,210.3 3.0,209.1 4.0,207.8 5.0,206.3 6.0,204.9 7.0,203.3 8.0,201.6 9.0,199.8 10.0,198.0 11.0,196.0 12.0,194.0 13.0,191.9 14.0,189.6 15.0,187.3 16.0,184.8 17.0,182.2 18.0,179.6 19.0,176.8 20.0,173.9 21.0,170.9 22.0,167.8 23.0,164.6 24.0,161.3 25.0,157.9 26.0,154.3 27.0,150.7 28.0,147.0 29.0,143.2 30.0,139.3 31.0,135.3 32.0,131.3 33.0,127.2 34.0,123.0 35.0,118.7 36.0,114.4 37.0,110.0 38.0,105.6 39.0,101.2 40.0,96.7 41.0,92.3 42.0,87.8 43.0,83.3 44.0,78.9 45.0,74.4 46.0,70.0 47.0,65.7 48.0,61.4 49.0,57.2 50.0,53.0 51.0,49.0 52.0,45.0 53.0,41.2 54.0,37.5 55.0,33.9 56.0,30.4 57.0,27.1 58.0,24.0 59.0,21.0 60.0,18.3 61.0,15.7 62.0,13.3 63.0,11.1 64.0,9.1 65.0,7.3 66.0,5.8 67.0,4.5 68.0,3.4 69.0,2.6 70.0,2.0 71.0,1.6 72.0,1.5 73.0,1.6 74.0,2.0 75.0,2.6 76.0,3.4 77.0,4.5 78.0,5.8 79.0,7.3 80.0,9.1 81.0,11.1 82.0,13.3 83.0,15.7 84.0,18.3 85.0,21.0 86.0,24.0 87.0,27.1 88.0,30.4 89.0,33.9 90.0,37.5 91.0,41.2 92.0,45.0 93.0,49.0 94.0,53.0 95.0,57.2 96.0,61.4 97.0,65.7 98.0,70.0 99.0,74.4 100.0,78.9 101.0,83.3 102.0,87.8 103.0,92.3 104.0,96.7 105.0,101.2 106.0,105.6 107.0,110.0 108.0,114.4 109.0,118.7 110.0,123.0 111.0,127.2 112.0,131.3 113.0,135.3 114.0,139.3 115.0,143.2 116.0,147.0 117.0,150.7 118.0,154.3 119.0,157.9 120.0,161.3 121.0,164.6 122.0,167.8 123.0,170.9 124.0,173.9 125.0,176.8 126.0,179.6 127.0,182.2 128.0,184.8 129.0,187.3 130.0,189.6 131.0,191.9 132.0,194.0 133.0,196.0 134.0,198.0 135.0,199.8 136.0,201.6 137.0,203.3 138.0,204.9 139.0,206.3 140.0,207.8 141.0,209.1 142.0,210.3 143.0,211.5 144.0,212.6 145.0,213.7 146.0,214.6 147.0,215.6 148.0,216.4 149.0,217.2 150.0,217.9 151.0,218.6 152.0,219.3 153.0,219.9 154.0,220.4 155.0,221.0 156.0,221.4 157.0,221.9 158.0,222.3 159.0,222.7 160.0,223.0 161.0,223.3 162.0,223.6 163.0,223.9 164.0,224.1 165.0,224.3 166.0,224.6 167.0,224.7 168.0,224.9 169.0,225.1 170.0,225.2 171.0,225.3 172.0,225.5 173.0,225.6 174.0,225.7 175.0,225.7 176.0,225.8 177.0,225.9 178.0,226.0 179.0,226.0 180.0,226.1 181.0,226.1 182.0,226.2 183.0,226.2 184.0,226.2 185.0,226.3 186.0,226.3 187.0,226.3 188.0,226.3 189.0,226.4 190.0,226.4 191.0,226.4 192.0,226.4 193.0,226.4 194.0,226.4 195.0,226.4 196.0,226.4 197.0,226.4 198.0,226.5 199.0,226.5 200.0,226.5 201.0,226.5 202.0,226.5 203.0,226.5 204.0,226.5 205.0,226.5 206.0,226.5 207.0,226.5" fill="none" stroke="#f04040" stroke-width="1" stroke-dasharray="3,2" opacity="0.7"/><polyline points="1.0,213.8 2.0,212.8 3.0,211.7 4.0,210.5 5.0,209.3 6.0,208.0 7.0,206.6 8.0,205.2 9.0,203.6 10.0,202.0 11.0,200.3 12.0,198.5 13.0,196.6 14.0,194.7 15.0,192.6 16.0,190.4 17.0,188.1 18.0,185.7 19.0,183.3 20.0,180.7 21.0,178.0 22.0,175.2 23.0,172.3 24.0,169.3 25.0,166.2 26.0,163.0 27.0,159.7 28.0,156.3 29.0,152.7 30.0,149.1 31.0,145.5 32.0,141.7 33.0,137.8 34.0,133.9 35.0,129.8 36.0,125.8 37.0,121.6 38.0,117.4 39.0,113.1 40.0,108.8 41.0,104.5 42.0,100.1 43.0,95.8 44.0,91.4 45.0,86.9 46.0,82.6 47.0,78.2 48.0,73.8 49.0,69.5 50.0,65.2 51.0,61.0 52.0,56.9 53.0,52.8 54.0,48.8 55.0,44.9 56.0,41.1 57.0,37.5 58.0,33.9 59.0,30.5 60.0,27.3 61.0,24.2 62.0,21.3 63.0,18.5 64.0,16.0 65.0,13.6 66.0,11.4 67.0,9.4 68.0,7.7 69.0,6.1 70.0,4.8 71.0,3.7 72.0,2.8 73.0,2.1 74.0,1.7 75.0,1.5 76.0,1.6 77.0,1.8 78.0,2.4 79.0,3.1 80.0,4.1 81.0,5.3 82.0,6.7 83.0,8.3 84.0,10.2 85.0,12.2 86.0,14.5 87.0,17.0 88.0,19.6 89.0,22.4 90.0,25.4 91.0,28.6 92.0,31.9 93.0,35.3 94.0,38.9 95.0,42.6 96.0,46.5 97.0,50.4 98.0,54.4 99.0,58.5 100.0,62.7 101.0,66.9 102.0,71.2 103.0,75.6 104.0,79.9 105.0,84.3 106.0,88.7 107.0,93.1 108.0,97.5 109.0,101.9 110.0,106.2 111.0,110.6 112.0,114.9 113.0,119.1 114.0,123.3 115.0,127.4 116.0,131.5 117.0,135.5 118.0,139.4 119.0,143.2 120.0,146.9 121.0,150.6 122.0,154.2 123.0,157.6 124.0,161.0 125.0,164.3 126.0,167.4 127.0,170.5 128.0,173.5 129.0,176.3 130.0,179.1 131.0,181.7 132.0,184.3 133.0,186.7 134.0,189.0 135.0,191.3 136.0,193.4 137.0,195.5 138.0,197.4 139.0,199.3 140.0,201.0 141.0,202.7 142.0,204.3 143.0,205.8 144.0,207.2 145.0,208.5 146.0,209.8 147.0,211.0 148.0,212.1 149.0,213.2 150.0,214.2 151.0,215.1 152.0,216.0 153.0,216.8 154.0,217.5 155.0,218.2 156.0,218.9 157.0,219.5 158.0,220.1 159.0,220.6 160.0,221.1 161.0,221.6 162.0,222.0 163.0,222.4 164.0,222.7 165.0,223.1 166.0,223.4 167.0,223.7 168.0,223.9 169.0,224.2 170.0,224.4 171.0,224.6 172.0,224.8 173.0,224.9 174.0,225.1 175.0,225.2 176.0,225.3 177.0,225.5 178.0,225.6 179.0,225.7 180.0,225.7 181.0,225.8 182.0,225.9 183.0,226.0 184.0,226.0 185.0,226.1 186.0,226.1 187.0,226.2 188.0,226.2 189.0,226.2 190.0,226.3 191.0,226.3 192.0,226.3 193.0,226.3 194.0,226.4 195.0,226.4 196.0,226.4 197.0,226.4 198.0,226.4 199.0,226.4 200.0,226.4 201.0,226.4 202.0,226.4 203.0,226.5 204.0,226.5 205.0,226.5 206.0,226.5 207.0,226.5" fill="none" stroke="#5050f0" stroke-width="1" stroke-dasharray="3,2" opacity="0.7"/><polygon points="48.0,226.5 48.0,226.5 48.5,224.6 49.0,222.8 49.5,220.9 50.0,219.0 50.5,217.1 51.0,215.2 51.5,213.4 52.0,211.5 52.5,209.6 53.0,207.8 53.5,205.9 54.0,204.0 54.5,202.1 55.0,200.2 55.5,198.4 56.0,196.5 56.5,189.0 57.0,181.5 57.5,174.0 58.0,166.5 58.5,159.0 59.0,151.5 59.5,144.0 60.0,136.5 60.5,132.8 61.0,129.2 61.5,125.5 62.0,121.8 62.5,118.2 63.0,114.5 63.5,113.2 64.0,112.0 64.5,110.8 65.0,109.5 65.5,111.2 66.0,113.0 66.5,114.8 67.0,116.5 67.5,118.7 68.0,120.8 68.5,123.0 69.0,125.2 69.5,127.3 70.0,129.5 70.5,131.0 71.0,132.4 71.5,133.9 72.0,135.4 72.5,136.9 73.0,138.3 73.5,139.9 74.0,142.0 74.5,144.1 75.0,146.2 75.5,148.2 76.0,150.3 76.5,152.4 77.0,154.5 77.5,156.4 78.0,158.3 78.5,160.2 79.0,162.1 79.5,164.0 80.0,165.9 80.5,167.8 81.0,169.7 81.5,171.6 82.0,173.2 82.5,174.6 83.0,176.1 83.5,177.5 84.0,178.9 84.5,180.4 85.0,181.8 85.5,183.2 86.0,184.6 86.5,186.0 87.0,187.5 87.5,188.9 88.0,190.3 88.5,191.7 89.0,193.1 89.5,194.5 90.0,195.9 90.5,197.3 91.0,198.7 91.5,200.1 92.0,201.5 92.5,202.5 93.0,203.5 93.5,204.5 94.0,205.5 94.5,206.5 95.0,207.5 95.5,208.0 96.0,208.5 96.5,209.0 97.0,209.5 97.5,210.0 98.0,210.5 98.5,211.0 99.0,211.5 99.5,212.0 100.0,212.5 100.5,213.0 101.0,213.5 101.5,214.0 102.0,214.5 102.5,214.8 103.0,215.1 103.5,215.4 104.0,215.7 104.5,216.0 105.0,216.3 105.5,216.6 106.0,216.9 106.5,217.1 107.0,217.4 107.5,217.7 108.0,218.0 108.5,218.3 109.0,218.6 109.5,218.8 110.0,218.9 110.5,219.1 111.0,219.3 111.5,219.5 112.0,219.6 112.5,219.8 113.0,220.0 113.5,220.2 114.0,220.4 114.5,220.5 115.0,220.7 115.5,220.9 116.0,221.1 116.5,221.2 117.0,221.4 117.5,221.6 118.0,221.8 118.5,222.0 119.0,222.1 119.5,222.3 120.0,222.5 120.5,222.6 121.0,222.6 121.5,222.7 122.0,222.7 122.5,222.8 123.0,222.8 123.5,222.9 124.0,222.9 124.5,223.0 125.0,223.0 125.5,223.1 126.0,223.1 126.5,223.2 127.0,223.2 127.5,223.3 128.0,223.4 128.5,223.4 129.0,223.5 129.5,223.5 130.0,223.6 130.5,223.6 131.0,223.7 131.5,223.7 132.0,223.8 132.5,223.8 133.0,223.9 133.5,223.9 134.0,224.0 134.5,224.1 135.0,224.1 135.5,224.2 136.0,224.2 136.5,224.3 137.0,224.3 137.5,224.4 138.0,224.4 138.5,224.5 139.0,224.5 139.5,224.6 140.0,224.6 140.5,224.7 141.0,224.8 141.5,224.8 142.0,224.9 142.5,224.9 143.0,225.0 143.5,225.0 144.0,225.1 144.5,225.1 145.0,225.2 145.5,225.2 146.0,225.3 146.5,225.3 147.0,225.4 147.5,225.4 148.0,225.5 148.5,225.5 149.0,225.5 149.5,225.5 150.0,225.5 150.5,225.5 151.0,225.6 151.5,225.6 152.0,225.6 152.5,225.6 153.0,225.6 153.5,225.6 154.0,225.6 154.5,225.6 155.0,225.6 155.5,225.6 156.0,225.7 156.5,225.7 157.0,225.7 157.5,225.7 158.0,225.7 158.5,225.7 159.0,225.7 159.5,225.7 160.0,225.7 160.5,225.8 161.0,225.8 161.5,225.8 162.0,225.8 162.5,225.8 163.0,225.8 163.5,225.8 164.0,225.8 164.5,225.8 165.0,225.8 165.5,225.9 166.0,225.9 166.5,225.9 167.0,225.9 167.5,225.9 168.0,225.9 168.5,225.9 169.0,225.9 169.5,225.9 170.0,225.9 170.5,226.0 171.0,226.0 171.5,226.0 172.0,226.0 172.5,226.0 173.0,226.0 173.5,226.0 174.0,226.0 174.5,226.0 175.0,226.0 175.5,226.0 176.0,226.1 176.5,226.1 177.0,226.1 177.5,226.1 178.0,226.1 178.5,226.1 179.0,226.1 179.5,226.1 180.0,226.1 180.5,226.1 181.0,226.2 181.5,226.2 182.0,226.2 182.5,226.2 183.0,226.2 183.5,226.2 184.0,226.2 184.5,226.2 185.0,226.2 185.5,226.2 186.0,226.3 186.5,226.3 187.0,226.3 187.5,226.3 188.0,226.3 188.5,226.3 189.0,226.3 189.5,226.3 190.0,226.3 190.5,226.4 191.0,226.4 191.5,226.4 192.0,226.4 192.5,226.4 193.0,226.4 193.5,226.4 194.0,226.4 194.5,226.4 195.0,226.4 195.5,226.5 196.0,226.5 196.5,226.5 197.0,226.5 197.5,226.5 198.0,226.5 198.0,226.5" fill="#0000ff"/><polygon points="39.0,226.5 39.0,226.5 39.5,226.1 40.0,225.7 40.5,225.3 41.0,224.9 41.5,224.5 42.0,224.1 42.5,223.7 43.0,223.3 43.5,222.9 44.0,222.5 44.5,221.7 45.0,220.8 45.5,220.0 46.0,219.2 46.5,218.3 47.0,217.5 47.5,216.7 48.0,215.8 48.5,215.0 49.0,213.2 49.5,210.0 50.0,206.7 50.5,203.5 51.0,200.2 51.5,197.0 52.0,192.1 52.5,186.2 53.0,180.2 53.5,174.3 54.0,168.3 54.5,162.4 55.0,155.0 55.5,146.7 56.0,138.4 56.5,130.2 57.0,126.4 57.5,123.8 58.0,121.1 58.5,118.5 59.0,118.1 59.5,117.7 60.0,117.3 60.5,116.9 61.0,116.5 61.5,116.8 62.0,117.2 62.5,117.5 63.0,117.8 63.5,118.2 64.0,118.5 64.5,121.2 65.0,124.0 65.5,126.8 66.0,129.5 66.5,132.2 67.0,135.0 67.5,137.8 68.0,140.5 68.5,143.2 69.0,145.8 69.5,148.5 70.0,151.2 70.5,153.8 71.0,156.5 71.5,159.2 72.0,161.8 72.5,164.5 73.0,167.2 73.5,169.8 74.0,172.5 74.5,173.7 75.0,174.9 75.5,176.1 76.0,177.3 76.5,178.5 77.0,179.7 77.5,180.9 78.0,182.1 78.5,183.3 79.0,184.5 79.5,185.7 80.0,186.9 80.5,188.1 81.0,189.3 81.5,190.5 82.0,191.7 82.5,192.9 83.0,194.1 83.5,195.3 84.0,196.5 84.5,197.2 85.0,198.0 85.5,198.8 86.0,199.5 86.5,200.2 87.0,201.0 87.5,201.8 88.0,202.5 88.5,203.2 89.0,204.0 89.5,204.8 90.0,205.5 90.5,206.2 91.0,207.0 91.5,207.8 92.0,208.5 92.5,209.0 93.0,209.4 93.5,209.9 94.0,210.4 94.5,210.8 95.0,211.3 95.5,211.8 96.0,212.2 96.5,212.7 97.0,213.2 97.5,213.7 98.0,214.1 98.5,214.6 99.0,215.1 99.5,215.5 100.0,216.0 100.5,216.2 101.0,216.5 101.5,216.8 102.0,217.0 102.5,217.2 103.0,217.5 103.5,217.8 104.0,218.0 104.5,218.2 105.0,218.5 105.5,218.8 106.0,219.0 106.5,219.2 107.0,219.5 107.5,219.8 108.0,220.0 108.5,220.1 109.0,220.2 109.5,220.4 110.0,220.5 110.5,220.6 111.0,220.7 111.5,220.8 112.0,221.0 112.5,221.1 113.0,221.2 113.5,221.3 114.0,221.5 114.5,221.6 115.0,221.7 115.5,221.8 116.0,221.9 116.5,222.1 117.0,222.2 117.5,222.3 118.0,222.4 118.5,222.5 119.0,222.7 119.5,222.8 120.0,222.9 120.5,222.9 121.0,223.0 121.5,223.0 122.0,223.0 122.5,223.0 123.0,223.1 123.5,223.1 124.0,223.1 124.5,223.2 125.0,223.2 125.5,223.2 126.0,223.2 126.5,223.3 127.0,223.3 127.5,223.3 128.0,223.4 128.5,223.4 129.0,223.4 129.5,223.4 130.0,223.5 130.5,223.5 131.0,223.5 131.5,223.6 132.0,223.6 132.5,223.6 133.0,223.6 133.5,223.7 134.0,223.7 134.5,223.7 135.0,223.8 135.5,223.8 136.0,223.8 136.5,223.8 137.0,223.9 137.5,223.9 138.0,223.9 138.5,224.0 139.0,224.0 139.5,224.0 140.0,224.0 140.5,224.1 141.0,224.1 141.5,224.1 142.0,224.2 142.5,224.2 143.0,224.2 143.5,224.2 144.0,224.3 144.5,224.3 145.0,224.3 145.5,224.4 146.0,224.4 146.5,224.4 147.0,224.4 147.5,224.5 148.0,224.5 148.5,224.5 149.0,224.5 149.5,224.6 150.0,224.6 150.5,224.6 151.0,224.6 151.5,224.6 152.0,224.7 152.5,224.7 153.0,224.7 153.5,224.7 154.0,224.7 154.5,224.8 155.0,224.8 155.5,224.8 156.0,224.8 156.5,224.8 157.0,224.9 157.5,224.9 158.0,224.9 158.5,224.9 159.0,224.9 159.5,225.0 160.0,225.0 160.5,225.0 161.0,225.0 161.5,225.0 162.0,225.1 162.5,225.1 163.0,225.1 163.5,225.1 164.0,225.1 164.5,225.2 165.0,225.2 165.5,225.2 166.0,225.2 166.5,225.2 167.0,225.3 167.5,225.3 168.0,225.3 168.5,225.3 169.0,225.3 169.5,225.4 170.0,225.4 170.5,225.4 171.0,225.4 171.5,225.4 172.0,225.5 172.5,225.5 173.0,225.5 173.5,225.5 174.0,225.5 174.5,225.6 175.0,225.6 175.5,225.6 176.0,225.6 176.5,225.6 177.0,225.7 177.5,225.7 178.0,225.7 178.5,225.7 179.0,225.7 179.5,225.8 180.0,225.8 180.5,225.8 181.0,225.8 181.5,225.8 182.0,225.9 182.5,225.9 183.0,225.9 183.5,225.9 184.0,225.9 184.5,226.0 185.0,226.0 185.5,226.0 186.0,226.0 186.5,226.0 187.0,226.1 187.5,226.1 188.0,226.1 188.5,226.1 189.0,226.1 189.5,226.2 190.0,226.2 190.5,226.2 191.0,226.2 191.5,226.2 192.0,226.3 192.5,226.3 193.0,226.3 193.5,226.3 194.0,226.3 194.5,226.4 195.0,226.4 195.5,226.4 196.0,226.4 196.5,226.4 197.0,226.5 197.5,226.5 198.0,226.5 198.0,226.5" fill="#ff0000"/><polygon points="42.0,226.5 42.0,226.5 42.5,225.9 43.0,225.3 43.5,224.7 44.0,224.1 44.5,223.5 45.0,222.9 45.5,222.3 46.0,221.7 46.5,221.1 47.0,220.5 47.5,219.9 48.0,219.3 48.5,218.7 49.0,218.1 49.5,217.5 50.0,214.5 50.5,211.5 51.0,208.5 51.5,205.5 52.0,202.5 52.5,199.5 53.0,196.5 53.5,191.2 54.0,185.9 54.5,180.6 55.0,175.3 55.5,170.0 56.0,164.7 56.5,158.4 57.0,147.9 57.5,137.5 58.0,129.4 58.5,121.9 59.0,108.0 59.5,111.8 60.0,97.9 60.5,98.0 61.0,100.8 61.5,89.4 62.0,100.7 62.5,95.7 63.0,107.1 63.5,111.5 64.0,111.1 64.5,110.1 65.0,126.1 65.5,123.8 66.0,127.2 66.5,130.5 67.0,133.8 67.5,137.2 68.0,140.5 68.5,143.8 69.0,147.2 69.5,150.5 70.0,153.8 70.5,157.2 71.0,160.5 71.5,162.5 72.0,164.5 72.5,166.5 73.0,168.5 73.5,170.5 74.0,172.5 74.5,173.9 75.0,175.3 75.5,176.7 76.0,178.1 76.5,179.5 77.0,180.9 77.5,182.3 78.0,183.7 78.5,185.1 79.0,186.5 79.5,188.1 80.0,189.8 80.5,191.4 81.0,193.0 81.5,194.6 82.0,196.2 82.5,197.9 83.0,199.5 83.5,200.3 84.0,201.1 84.5,202.0 85.0,202.8 85.5,203.6 86.0,204.5 86.5,205.3 87.0,206.1 87.5,206.9 88.0,207.8 88.5,208.6 89.0,209.4 89.5,209.9 90.0,210.3 90.5,210.8 91.0,211.2 91.5,211.6 92.0,212.1 92.5,212.5 93.0,213.0 93.5,213.5 94.0,213.9 94.5,214.4 95.0,214.8 95.5,215.2 96.0,215.7 96.5,216.0 97.0,216.3 97.5,216.6 98.0,216.9 98.5,217.2 99.0,217.5 99.5,217.8 100.0,218.1 100.5,218.4 101.0,218.7 101.5,219.0 102.0,219.3 102.5,219.6 103.0,219.9 103.5,220.2 104.0,220.3 104.5,220.5 105.0,220.6 105.5,220.8 106.0,220.9 106.5,221.1 107.0,221.2 107.5,221.3 108.0,221.5 108.5,221.6 109.0,221.8 109.5,221.9 110.0,222.0 110.5,222.2 111.0,222.3 111.5,222.5 112.0,222.6 112.5,222.8 113.0,222.9 113.5,223.0 114.0,223.1 114.5,223.2 115.0,223.4 115.5,223.5 116.0,223.6 116.5,223.7 117.0,223.8 117.5,223.9 118.0,224.0 118.5,224.1 119.0,224.2 119.5,224.4 120.0,224.5 120.5,224.6 121.0,224.7 121.5,224.7 122.0,224.7 122.5,224.8 123.0,224.8 123.5,224.8 124.0,224.8 124.5,224.8 125.0,224.9 125.5,224.9 126.0,224.9 126.5,224.9 127.0,224.9 127.5,225.0 128.0,225.0 128.5,225.0 129.0,225.0 129.5,225.0 130.0,225.1 130.5,225.1 131.0,225.1 131.5,225.1 132.0,225.1 132.5,225.2 133.0,225.2 133.5,225.2 134.0,225.2 134.5,225.2 135.0,225.3 135.5,225.3 136.0,225.3 136.5,225.3 137.0,225.3 137.5,225.4 138.0,225.4 138.5,225.4 139.0,225.4 139.5,225.4 140.0,225.5 140.5,225.5 141.0,225.5 141.5,225.5 142.0,225.5 142.5,225.6 143.0,225.6 143.5,225.6 144.0,225.6 144.5,225.6 145.0,225.7 145.5,225.7 146.0,225.7 146.5,225.7 147.0,225.7 147.5,225.8 148.0,225.8 148.5,225.8 149.0,225.8 149.5,225.8 150.0,225.8 150.5,225.8 151.0,225.8 151.5,225.8 152.0,225.8 152.5,225.8 153.0,225.9 153.5,225.9 154.0,225.9 154.5,225.9 155.0,225.9 155.5,225.9 156.0,225.9 156.5,225.9 157.0,225.9 157.5,225.9 158.0,225.9 158.5,225.9 159.0,225.9 159.5,225.9 160.0,226.0 160.5,226.0 161.0,226.0 161.5,226.0 162.0,226.0 162.5,226.0 163.0,226.0 163.5,226.0 164.0,226.0 164.5,226.0 165.0,226.0 165.5,226.0 166.0,226.0 166.5,226.0 167.0,226.1 167.5,226.1 168.0,226.1 168.5,226.1 169.0,226.1 169.5,226.1 170.0,226.1 170.5,226.1 171.0,226.1 171.5,226.1 172.0,226.1 172.5,226.1 173.0,226.1 173.5,226.1 174.0,226.2 174.5,226.2 175.0,226.2 175.5,226.2 176.0,226.2 176.5,226.2 177.0,226.2 177.5,226.2 178.0,226.2 178.5,226.2 179.0,226.2 179.5,226.2 180.0,226.2 180.5,226.2 181.0,226.3 181.5,226.3 182.0,226.3 182.5,226.3 183.0,226.3 183.5,226.3 184.0,226.3 184.5,226.3 185.0,226.3 185.5,226.3 186.0,226.3 186.5,226.3 187.0,226.3 187.5,226.3 188.0,226.4 188.5,226.4 189.0,226.4 189.5,226.4 190.0,226.4 190.5,226.4 191.0,226.4 191.5,226.4 192.0,226.4 192.5,226.4 193.0,226.4 193.5,226.4 194.0,226.4 194.5,226.4 195.0,226.5 195.5,226.5 196.0,226.5 196.5,226.5 197.0,226.5 197.5,226.5 198.0,226.5 198.0,226.5" fill="#00e800"/><polygon points="41.0,226.5 41.0,226.5 41.5,226.1 42.0,225.7 42.5,225.3 43.0,224.9 43.5,224.5 44.0,224.1 44.5,223.7 45.0,223.3 45.5,222.9 46.0,222.5 46.5,221.6 47.0,220.8 47.5,219.9 48.0,219.1 48.5,218.2 49.0,217.4 49.5,216.5 50.0,213.5 50.5,210.6 51.0,207.6 51.5,204.6 52.0,201.6 52.5,198.7 53.0,195.7 53.5,190.3 54.0,184.9 54.5,179.5 55.0,174.1 55.5,168.7 56.0,163.2 56.5,156.3 57.0,147.0 57.5,137.8 58.0,130.1 58.5,123.0 59.0,116.3 59.5,114.0 60.0,111.2 60.5,103.1 61.0,105.9 61.5,99.8 62.0,104.1 62.5,105.1 63.0,109.3 63.5,111.8 64.0,112.4 64.5,119.6 65.0,120.0 65.5,123.5 66.0,126.5 66.5,130.5 67.0,134.5 67.5,138.5 68.0,142.5 68.5,146.5 69.0,150.5 69.5,154.4 70.0,158.4 70.5,161.3 71.0,163.6 71.5,165.8 72.0,168.0 72.5,170.3 73.0,172.5 73.5,173.9 74.0,175.3 74.5,176.7 75.0,178.1 75.5,179.5 76.0,180.9 76.5,182.3 77.0,183.7 77.5,185.1 78.0,186.5 78.5,187.8 79.0,189.1 79.5,190.4 80.0,191.7 80.5,193.0 81.0,194.3 81.5,195.6 82.0,196.9 82.5,198.2 83.0,199.5 83.5,200.3 84.0,201.1 84.5,202.0 85.0,202.8 85.5,203.6 86.0,204.5 86.5,205.3 87.0,206.1 87.5,206.9 88.0,207.8 88.5,208.6 89.0,209.4 89.5,209.9 90.0,210.3 90.5,210.8 91.0,211.2 91.5,211.6 92.0,212.1 92.5,212.5 93.0,213.0 93.5,213.5 94.0,213.9 94.5,214.4 95.0,214.8 95.5,215.2 96.0,215.7 96.5,216.0 97.0,216.3 97.5,216.6 98.0,216.9 98.5,217.2 99.0,217.5 99.5,217.8 100.0,218.1 100.5,218.4 101.0,218.7 101.5,219.0 102.0,219.3 102.5,219.6 103.0,219.9 103.5,220.2 104.0,220.3 104.5,220.5 105.0,220.6 105.5,220.8 106.0,220.9 106.5,221.1 107.0,221.2 107.5,221.3 108.0,221.5 108.5,221.6 109.0,221.8 109.5,221.9 110.0,222.0 110.5,222.2 111.0,222.3 111.5,222.5 112.0,222.6 112.5,222.8 113.0,222.9 113.5,223.0 114.0,223.1 114.5,223.2 115.0,223.4 115.5,223.5 116.0,223.6 116.5,223.7 117.0,223.8 117.5,223.9 118.0,224.0 118.5,224.1 119.0,224.2 119.5,224.4 120.0,224.5 120.5,224.6 121.0,224.7 121.5,224.7 122.0,224.7 122.5,224.8 123.0,224.8 123.5,224.8 124.0,224.8 124.5,224.8 125.0,224.9 125.5,224.9 126.0,224.9 126.5,224.9 127.0,224.9 127.5,225.0 128.0,225.0 128.5,225.0 129.0,225.0 129.5,225.0 130.0,225.1 130.5,225.1 131.0,225.1 131.5,225.1 132.0,225.1 132.5,225.2 133.0,225.2 133.5,225.2 134.0,225.2 134.5,225.2 135.0,225.3 135.5,225.3 136.0,225.3 136.5,225.3 137.0,225.3 137.5,225.4 138.0,225.4 138.5,225.4 139.0,225.4 139.5,225.4 140.0,225.5 140.5,225.5 141.0,225.5 141.5,225.5 142.0,225.5 142.5,225.6 143.0,225.6 143.5,225.6 144.0,225.6 144.5,225.6 145.0,225.7 145.5,225.7 146.0,225.7 146.5,225.7 147.0,225.7 147.5,225.8 148.0,225.8 148.5,225.8 149.0,225.8 149.5,225.8 150.0,225.8 150.5,225.8 151.0,225.8 151.5,225.8 152.0,225.8 152.5,225.8 153.0,225.9 153.5,225.9 154.0,225.9 154.5,225.9 155.0,225.9 155.5,225.9 156.0,225.9 156.5,225.9 157.0,225.9 157.5,225.9 158.0,225.9 158.5,225.9 159.0,225.9 159.5,225.9 160.0,226.0 160.5,226.0 161.0,226.0 161.5,226.0 162.0,226.0 162.5,226.0 163.0,226.0 163.5,226.0 164.0,226.0 164.5,226.0 165.0,226.0 165.5,226.0 166.0,226.0 166.5,226.0 167.0,226.1 167.5,226.1 168.0,226.1 168.5,226.1 169.0,226.1 169.5,226.1 170.0,226.1 170.5,226.1 171.0,226.1 171.5,226.1 172.0,226.1 172.5,226.1 173.0,226.1 173.5,226.1 174.0,226.2 174.5,226.2 175.0,226.2 175.5,226.2 176.0,226.2 176.5,226.2 177.0,226.2 177.5,226.2 178.0,226.2 178.5,226.2 179.0,226.2 179.5,226.2 180.0,226.2 180.5,226.2 181.0,226.3 181.5,226.3 182.0,226.3 182.5,226.3 183.0,226.3 183.5,226.3 184.0,226.3 184.5,226.3 185.0,226.3 185.5,226.3 186.0,226.3 186.5,226.3 187.0,226.3 187.5,226.3 188.0,226.4 188.5,226.4 189.0,226.4 189.5,226.4 190.0,226.4 190.5,226.4 191.0,226.4 191.5,226.4 192.0,226.4 192.5,226.4 193.0,226.4 193.5,226.4 194.0,226.4 194.5,226.4 195.0,226.5 195.5,226.5 196.0,226.5 196.5,226.5 197.0,226.5 197.5,226.5 198.0,226.5 198.0,226.5" fill="#808000"/><polygon points="42.8,226.5 42.8,226.5 43.3,225.9 43.8,225.3 44.3,224.8 44.8,224.2 45.3,223.6 45.8,223.0 46.3,222.4 46.8,221.8 47.3,221.2 47.8,220.7 48.3,220.1 48.8,219.5 49.3,217.2 49.8,214.9 50.3,212.6 50.8,210.3 51.3,208.1 51.8,205.8 52.3,203.5 52.8,201.2 53.3,198.9 53.8,196.6 54.3,192.8 54.8,188.0 55.3,183.2 55.8,178.3 56.3,173.5 56.8,168.7 57.3,163.9 57.8,158.3 58.3,149.5 58.8,140.8 59.3,132.0 59.8,126.1 60.3,122.1 60.8,118.1 61.3,116.1 61.8,115.3 62.3,114.6 62.8,113.8 63.3,114.1 63.8,115.1 64.3,117.0 64.8,119.5 65.3,122.0 65.8,124.5 66.3,127.7 66.8,131.5 67.3,135.2 67.8,139.0 68.3,142.4 68.8,145.6 69.3,148.7 69.8,151.9 70.3,155.1 70.8,158.2 71.3,160.8 71.8,163.0 72.3,165.1 72.8,167.3 73.3,169.5 73.8,171.6 74.3,173.3 74.8,174.5 75.3,175.8 75.8,177.0 76.3,178.3 76.8,179.5 77.3,180.8 77.8,182.0 78.3,183.3 78.8,184.5 79.3,185.6 79.8,186.8 80.3,188.0 80.8,189.1 81.3,190.3 81.8,191.4 82.3,192.6 82.8,193.7 83.3,194.9 83.8,196.0 84.3,197.0 84.8,198.0 85.3,198.9 85.8,199.8 86.3,200.7 86.8,201.6 87.3,202.5 87.8,203.5 88.3,204.4 88.8,205.3 89.3,206.2 89.8,207.1 90.3,207.8 90.8,208.3 91.3,208.8 91.8,209.3 92.3,209.8 92.8,210.3 93.3,210.8 93.8,211.3 94.3,211.8 94.8,212.3 95.3,212.8 95.8,213.3 96.3,213.8 96.8,214.3 97.3,214.7 97.8,215.2 98.3,215.6 98.8,216.0 99.3,216.4 99.8,216.8 100.3,217.2 100.8,217.6 101.3,218.0 101.8,218.5 102.3,218.9 102.8,219.3 103.3,219.7 103.8,219.9 104.3,220.1 104.8,220.2 105.3,220.4 105.8,220.5 106.3,220.7 106.8,220.8 107.3,221.0 107.8,221.1 108.3,221.3 108.8,221.4 109.3,221.6 109.8,221.7 110.3,221.9 110.8,222.0 111.3,222.2 111.8,222.3 112.3,222.5 112.8,222.6 113.3,222.8 113.8,222.9 114.3,223.0 114.8,223.1 115.3,223.2 115.8,223.4 116.3,223.5 116.8,223.6 117.3,223.7 117.8,223.8 118.3,224.0 118.8,224.1 119.3,224.2 119.8,224.3 120.3,224.4 120.8,224.6 121.3,224.6 121.8,224.6 122.3,224.7 122.8,224.7 123.3,224.7 123.8,224.7 124.3,224.7 124.8,224.8 125.3,224.8 125.8,224.8 126.3,224.8 126.8,224.8 127.3,224.9 127.8,224.9 128.3,224.9 128.8,224.9 129.3,225.0 129.8,225.0 130.3,225.0 130.8,225.0 131.3,225.0 131.8,225.1 132.3,225.1 132.8,225.1 133.3,225.1 133.8,225.1 134.3,225.2 134.8,225.2 135.3,225.2 135.8,225.2 136.3,225.2 136.8,225.3 137.3,225.3 137.8,225.3 138.3,225.3 138.8,225.4 139.3,225.4 139.8,225.4 140.3,225.4 140.8,225.4 141.3,225.5 141.8,225.5 142.3,225.5 142.8,225.5 143.3,225.5 143.8,225.6 144.3,225.6 144.8,225.6 145.3,225.6 145.8,225.6 146.3,225.7 146.8,225.7 147.3,225.7 147.8,225.7 148.3,225.7 148.8,225.8 149.3,225.8 149.8,225.8 150.3,225.8 150.8,225.8 151.3,225.8 151.8,225.8 152.3,225.8 152.8,225.8 153.3,225.8 153.8,225.8 154.3,225.8 154.8,225.8 155.3,225.9 155.8,225.9 156.3,225.9 156.8,225.9 157.3,225.9 157.8,225.9 158.3,225.9 158.8,225.9 159.3,225.9 159.8,225.9 160.3,225.9 160.8,225.9 161.3,225.9 161.8,225.9 162.3,226.0 162.8,226.0 163.3,226.0 163.8,226.0 164.3,226.0 164.8,226.0 165.3,226.0 165.8,226.0 166.3,226.0 166.8,226.0 167.3,226.0 167.8,226.0 168.3,226.0 168.8,226.1 169.3,226.1 169.8,226.1 170.3,226.1 170.8,226.1 171.3,226.1 171.8,226.1 172.3,226.1 172.8,226.1 173.3,226.1 173.8,226.1 174.3,226.1 174.8,226.1 175.3,226.2 175.8,226.2 176.3,226.2 176.8,226.2 177.3,226.2 177.8,226.2 178.3,226.2 178.8,226.2 179.3,226.2 179.8,226.2 180.3,226.2 180.8,226.2 181.3,226.2 181.8,226.3 182.3,226.3 182.8,226.3 183.3,226.3 183.8,226.3 184.3,226.3 184.8,226.3 185.3,226.3 185.8,226.3 186.3,226.3 186.8,226.3 187.3,226.3 187.8,226.3 188.3,226.4 188.8,226.4 189.3,226.4 189.8,226.4 190.3,226.4 190.8,226.4 191.3,226.4 191.8,226.4 192.3,226.4 192.8,226.4 193.3,226.4 193.8,226.4 194.3,226.4 194.8,226.5 195.3,226.5 195.8,226.5 196.3,226.5 196.8,226.5 197.3,226.5 197.8,226.5 198.0,226.5" fill="#008080"/><polygon points="42.8,226.5 42.8,226.5 43.3,225.9 43.8,225.3 44.3,224.8 44.8,224.2 45.3,223.6 45.8,223.0 46.3,222.4 46.8,221.8 47.3,221.2 47.8,220.7 48.3,220.1 48.8,219.5 49.3,217.2 49.8,214.9 50.3,212.6 50.8,210.3 51.3,208.1 51.8,205.8 52.3,203.5 52.8,201.2 53.3,198.9 53.8,196.6 54.3,192.8 54.8,188.0 55.3,183.2 55.8,178.3 56.3,173.5 56.8,168.7 57.3,163.9 57.8,158.3 58.3,149.5 58.8,140.8 59.3,132.0 59.8,126.1 60.3,122.1 60.8,118.1 61.3,116.1 61.8,115.3 62.3,114.6 62.8,113.8 63.3,114.4 63.8,115.9 64.3,118.0 64.8,120.5 65.3,123.0 65.8,125.5 66.3,128.9 66.8,132.9 67.3,136.9 67.8,140.9 68.3,144.9 68.8,148.9 69.3,152.8 69.8,156.8 70.3,160.4 70.8,162.7 71.3,164.9 71.8,167.1 72.3,169.4 72.8,171.6 73.3,173.3 73.8,174.6 74.3,175.9 74.8,177.2 75.3,178.5 75.8,179.9 76.3,181.2 76.8,182.5 77.3,183.8 77.8,184.9 78.3,186.0 78.8,187.1 79.3,188.3 79.8,189.4 80.3,190.5 80.8,191.6 81.3,192.7 81.8,193.8 82.3,194.9 82.8,196.1 83.3,197.0 83.8,198.0 84.3,198.9 84.8,199.8 85.3,200.7 85.8,201.6 86.3,202.5 86.8,203.5 87.3,204.4 87.8,205.3 88.3,206.2 88.8,207.1 89.3,207.8 89.8,208.3 90.3,208.8 90.8,209.3 91.3,209.8 91.8,210.3 92.3,210.8 92.8,211.3 93.3,211.8 93.8,212.3 94.3,212.8 94.8,213.3 95.3,213.8 95.8,214.3 96.3,214.7 96.8,215.0 97.3,215.4 97.8,215.7 98.3,216.0 98.8,216.4 99.3,216.7 99.8,217.0 100.3,217.4 100.8,217.7 101.3,218.0 101.8,218.4 102.3,218.7 102.8,219.0 103.3,219.4 103.8,219.6 104.3,219.8 104.8,219.9 105.3,220.1 105.8,220.2 106.3,220.4 106.8,220.5 107.3,220.7 107.8,220.9 108.3,221.0 108.8,221.2 109.3,221.3 109.8,221.5 110.3,221.6 110.8,221.8 111.3,222.0 111.8,222.1 112.3,222.3 112.8,222.4 113.3,222.6 113.8,222.7 114.3,222.8 114.8,223.0 115.3,223.1 115.8,223.2 116.3,223.3 116.8,223.5 117.3,223.6 117.8,223.7 118.3,223.8 118.8,224.0 119.3,224.1 119.8,224.2 120.3,224.3 120.8,224.5 121.3,224.5 121.8,224.5 122.3,224.6 122.8,224.6 123.3,224.6 123.8,224.6 124.3,224.6 124.8,224.7 125.3,224.7 125.8,224.7 126.3,224.7 126.8,224.8 127.3,224.8 127.8,224.8 128.3,224.8 128.8,224.8 129.3,224.9 129.8,224.9 130.3,224.9 130.8,224.9 131.3,225.0 131.8,225.0 132.3,225.0 132.8,225.0 133.3,225.0 133.8,225.1 134.3,225.1 134.8,225.1 135.3,225.1 135.8,225.2 136.3,225.2 136.8,225.2 137.3,225.2 137.8,225.2 138.3,225.3 138.8,225.3 139.3,225.3 139.8,225.3 140.3,225.4 140.8,225.4 141.3,225.4 141.8,225.4 142.3,225.4 142.8,225.5 143.3,225.5 143.8,225.5 144.3,225.5 144.8,225.6 145.3,225.6 145.8,225.6 146.3,225.6 146.8,225.6 147.3,225.7 147.8,225.7 148.3,225.7 148.8,225.7 149.3,225.7 149.8,225.7 150.3,225.7 150.8,225.7 151.3,225.8 151.8,225.8 152.3,225.8 152.8,225.8 153.3,225.8 153.8,225.8 154.3,225.8 154.8,225.8 155.3,225.8 155.8,225.8 156.3,225.8 156.8,225.8 157.3,225.8 157.8,225.9 158.3,225.9 158.8,225.9 159.3,225.9 159.8,225.9 160.3,225.9 160.8,225.9 161.3,225.9 161.8,225.9 162.3,225.9 162.8,225.9 163.3,225.9 163.8,226.0 164.3,226.0 164.8,226.0 165.3,226.0 165.8,226.0 166.3,226.0 166.8,226.0 167.3,226.0 167.8,226.0 168.3,226.0 168.8,226.0 169.3,226.0 169.8,226.0 170.3,226.1 170.8,226.1 171.3,226.1 171.8,226.1 172.3,226.1 172.8,226.1 173.3,226.1 173.8,226.1 174.3,226.1 174.8,226.1 175.3,226.1 175.8,226.1 176.3,226.2 176.8,226.2 177.3,226.2 177.8,226.2 178.3,226.2 178.8,226.2 179.3,226.2 179.8,226.2 180.3,226.2 180.8,226.2 181.3,226.2 181.8,226.2 182.3,226.2 182.8,226.3 183.3,226.3 183.8,226.3 184.3,226.3 184.8,226.3 185.3,226.3 185.8,226.3 186.3,226.3 186.8,226.3 187.3,226.3 187.8,226.3 188.3,226.3 188.8,226.4 189.3,226.4 189.8,226.4 190.3,226.4 190.8,226.4 191.3,226.4 191.8,226.4 192.3,226.4 192.8,226.4 193.3,226.4 193.8,226.4 194.3,226.4 194.8,226.4 195.3,226.5 195.8,226.5 196.3,226.5 196.8,226.5 197.3,226.5 197.8,226.5 198.0,226.5" fill="#575757"/><rect x="24" y="226.0" width="16" height="1" fill="#707070"/><rect x="21" y="226.0" width="3" height="1" fill="#00e000"/><rect x="108" y="225.0" width="40" height="1.5" fill="#e01010"/><rect x="148" y="225.5" width="45" height="1" fill="#a020c0"/><rect x="360" y="223.5" width="1" height="3" fill="#0000c0"/><rect x="20" y="2" width="1" height="226" fill="#222"/><rect x="20" y="1" width="1" height="2" fill="#f00030"/><polyline points="1.0,227.0 2.0,226.7 3.0,226.3 4.0,225.9 5.0,225.5 6.0,224.9 7.0,224.3 8.0,223.6 9.0,222.8 10.0,221.9 11.0,221.1 12.0,220.2 13.0,219.4 14.0,218.6 15.0,217.8 16.0,217.2 17.0,216.6 18.0,216.2 19.0,215.8 20.0,215.4 21.0,215.1 22.0,214.8 23.0,214.4 24.0,214.1 25.0,213.6 26.0,213.1 27.0,212.4 28.0,211.7 29.0,210.9 30.0,210.1 31.0,209.2 32.0,208.4 33.0,207.5 34.0,206.7 35.0,206.0 36.0,205.3 37.0,204.8 38.0,204.3 39.0,203.9 40.0,203.5 41.0,203.2 42.0,202.9 43.0,202.5 44.0,202.2 45.0,201.7 46.0,201.2 47.0,200.6 48.0,199.9 49.0,199.1 50.0,198.3 51.0,197.4 52.0,196.5 53.0,195.7 54.0,194.9 55.0,194.1 56.0,193.5 57.0,192.9 58.0,192.4 59.0,192.0 60.0,191.6 61.0,191.3 62.0,191.0 63.0,190.6 64.0,190.3 65.0,189.8 66.0,189.3 67.0,188.7 68.0,188.0 69.0,187.2 70.0,186.4 71.0,185.5 72.0,184.7 73.0,183.8 74.0,183.0 75.0,182.3 76.0,181.6 77.0,181.0 78.0,180.5 79.0,180.1 80.0,179.7 81.0,179.4 82.0,179.1 83.0,178.7 84.0,178.4 85.0,177.9 86.0,177.4 87.0,176.8 88.0,176.1 89.0,175.4 90.0,174.6 91.0,173.7 92.0,172.8 93.0,172.0 94.0,171.2 95.0,170.4 96.0,169.7 97.0,169.1 98.0,168.6 99.0,168.2 100.0,167.8 101.0,167.5 102.0,167.2 103.0,166.8 104.0,166.5 105.0,166.1 106.0,165.6 107.0,165.0 108.0,164.3 109.0,163.5 110.0,162.7 111.0,161.9 112.0,161.0 113.0,160.1 114.0,159.3 115.0,158.5 116.0,157.8 117.0,157.2 118.0,156.7 119.0,156.3 120.0,155.9 121.0,155.6 122.0,155.3 123.0,154.9 124.0,154.6 125.0,154.2 126.0,153.7 127.0,153.1 128.0,152.4 129.0,151.7 130.0,150.9 131.0,150.0 132.0,149.1 133.0,148.3 134.0,147.4 135.0,146.7 136.0,146.0 137.0,145.4 138.0,144.8 139.0,144.4 140.0,144.0 141.0,143.7 142.0,143.4 143.0,143.0 144.0,142.7 145.0,142.3 146.0,141.8 147.0,141.2 148.0,140.6 149.0,139.8 150.0,139.0 151.0,138.2 152.0,137.3 153.0,136.4 154.0,135.6 155.0,134.8 156.0,134.1 157.0,133.5 158.0,133.0 159.0,132.5 160.0,132.1 161.0,131.8 162.0,131.5 163.0,131.1 164.0,130.8 165.0,130.4 166.0,129.9 167.0,129.4 168.0,128.7 169.0,128.0 170.0,127.2 171.0,126.3 172.0,125.5 173.0,124.6 174.0,123.7 175.0,123.0 176.0,122.2 177.0,121.6 178.0,121.1 179.0,120.6 180.0,120.2 181.0,119.9 182.0,119.6 183.0,119.2 184.0,118.9 185.0,118.5 186.0,118.0 187.0,117.5 188.0,116.8 189.0,116.1 190.0,115.3 191.0,114.5 192.0,113.6 193.0,112.7 194.0,111.9 195.0,111.1 196.0,110.4 197.0,109.7 198.0,109.2 199.0,108.7 200.0,108.3 201.0,108.0 202.0,107.7 203.0,107.3 204.0,107.0 205.0,106.6 206.0,106.1 207.0,105.6 208.0,105.0 209.0,104.3 210.0,103.5 211.0,102.6 212.0,101.8 213.0,100.9 214.0,100.0 215.0,99.2 216.0,98.5 217.0,97.9 218.0,97.3 219.0,96.8 220.0,96.4 221.0,96.1 222.0,95.8 223.0,95.4 224.0,95.1 225.0,94.7 226.0,94.3 227.0,93.7 228.0,93.1 229.0,92.4 230.0,91.6 231.0,90.8 232.0,89.9 233.0,89.1 234.0,88.2 235.0,87.4 236.0,86.7 237.0,86.0 238.0,85.4 239.0,84.9 240.0,84.5 241.0,84.2 242.0,83.8 243.0,83.5 244.0,83.2 245.0,82.8 246.0,82.4 247.0,81.9 248.0,81.2 249.0,80.5 250.0,79.8 251.0,78.9 252.0,78.1 253.0,77.2 254.0,76.4 255.0,75.5 256.0,74.8 257.0,74.1 258.0,73.5 259.0,73.1 260.0,72.6 261.0,72.3 262.0,71.9 263.0,71.6 264.0,71.3 265.0,70.9 266.0,70.5 267.0,70.0 268.0,69.4 269.0,68.7 270.0,67.9 271.0,67.1 272.0,66.2 273.0,65.4 274.0,64.5 275.0,63.7 276.0,62.9 277.0,62.3 278.0,61.7 279.0,61.2 280.0,60.7 281.0,60.4 282.0,60.0 283.0,59.7 284.0,59.4 285.0,59.0 286.0,58.6 287.0,58.1 288.0,57.5 289.0,56.8 290.0,56.1 291.0,55.3 292.0,54.4 293.0,53.5 294.0,52.7 295.0,51.8 296.0,51.1 297.0,50.4 298.0,49.8 299.0,49.3 300.0,48.8 301.0,48.5 302.0,48.1 303.0,47.8 304.0,47.5 305.0,47.1 306.0,46.7 307.0,46.2 308.0,45.6 309.0,45.0 310.0,44.2 311.0,43.4 312.0,42.5 313.0,41.7 314.0,40.8 315.0,40.0 316.0,39.2 317.0,38.5 318.0,37.9 319.0,37.4 320.0,36.9 321.0,36.6 322.0,36.2 323.0,35.9 324.0,35.6 325.0,35.2 326.0,34.8 327.0,34.3 328.0,33.8 329.0,33.1 330.0,32.4 331.0,31.6 332.0,30.7 333.0,29.8 334.0,29.0 335.0,28.1 336.0,27.4 337.0,26.7 338.0,26.0 339.0,25.5 340.0,25.1 341.0,24.7 342.0,24.3 343.0,24.0 344.0,23.7 345.0,23.3 346.0,22.9 347.0,22.5 348.0,21.9 349.0,21.2 350.0,20.5 351.0,19.7 352.0,18.9 353.0,18.0 354.0,17.1 355.0,16.3 356.0,15.5 357.0,14.8 358.0,14.2 359.0,13.6 360.0,13.2 361.0,12.8 362.0,12.4 363.0,12.1 364.0,11.8 365.0,11.5 366.0,11.1 367.0,10.6 368.0,10.0 369.0,9.4 370.0,8.7 371.0,7.9 372.0,7.0 373.0,6.1 374.0,5.3 375.0,4.4 376.0,3.6 377.0,2.9 378.0,2.3 379.0,1.7 380.0,1.3" fill="none" stroke="#111" stroke-width="1" stroke-dasharray="3.5,1.2"/></svg></div>
 </div>
</div>
</body></html>
